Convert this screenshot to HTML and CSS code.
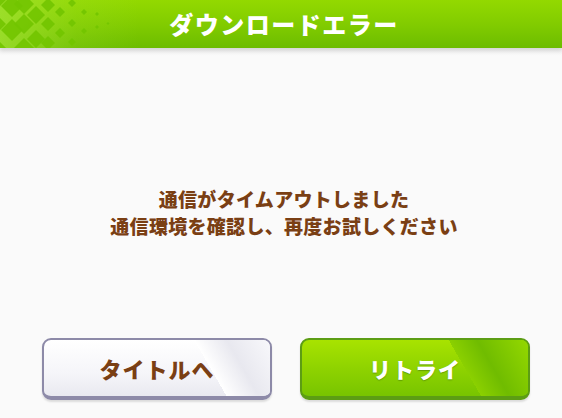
FILE: index.html
```html
<!DOCTYPE html>
<html lang="ja">
<head>
<meta charset="utf-8">
<link rel="stylesheet" href="styles.css">
</head>
<body>
<div class="dialog">
  <header class="header">
    <svg class="pattern" width="140" height="48" viewBox="0 0 140 48">
      <defs>
        <linearGradient id="fade" x1="0" x2="1" y1="0" y2="0">
          <stop offset="0" stop-color="#9fe030" stop-opacity="0.85"/>
          <stop offset="0.55" stop-color="#9fe030" stop-opacity="0.2"/>
          <stop offset="1" stop-color="#9fe030" stop-opacity="0"/>
        </linearGradient>
      </defs>
      <rect x="0" y="0" width="140" height="48" fill="url(#fade)"/>
      <g fill="#72c400" fill-opacity="0.9">
        <path d="M0 -6 l6 6 -6 6 -6 -6z"/>
        <path d="M0 18 l6 6 -6 6 -6 -6z"/>
        <path d="M0 42 l6 6 -6 6 -6 -6z"/>
        <path d="M12 -5 l11 11 -11 11 -11 -11z"/>
        <path d="M12 19 l11 11 -11 11 -11 -11z"/>
        <path d="M24 -6 l10 10 -10 10 -10 -10z"/>
        <path d="M24 14 l10 10 -10 10 -10 -10z"/>
        <path d="M24 38 l10 10 -10 10 -10 -10z"/>
        <path d="M36 6 l9 9 -9 9 -9 -9z"/>
        <path d="M36 30 l9 9 -9 9 -9 -9z"/>
        <path d="M48 -2 l7 7 -7 7 -7 -7z"/>
        <path d="M48 17 l7 7 -7 7 -7 -7z"/>
        <path d="M48 36 l7 7 -7 7 -7 -7z"/>
        <path d="M60 7 l5 5 -5 5 -5 -5z"/>
        <path d="M60 28 l5 5 -5 5 -5 -5z"/>
        <path d="M72 -1 l4 4 -4 4 -4 -4z"/>
        <path d="M72 19 l4 4 -4 4 -4 -4z"/>
        <path d="M72 38 l4 4 -4 4 -4 -4z"/>
        <path d="M84 9 l3 3 -3 3 -3 -3z"/>
        <path d="M84 28 l3 3 -3 3 -3 -3z"/>
        <path d="M97 12 l2 2 -2 2 -2 -2z"/>
        <path d="M97 25 l2 2 -2 2 -2 -2z"/>
        <path d="M108 22 l1.5 1.5 -1.5 1.5 -1.5 -1.5z"/>
      </g>
    </svg>
    <h1 class="title">ダウンロードエラー</h1>
  </header>
  <main class="body">
    <p class="message">通信がタイムアウトしました<br>通信環境を確認し、再度お試しください</p>
    <div class="buttons">
      <button class="btn btn-white"><span>タイトルへ</span></button>
      <button class="btn btn-green"><span>リトライ</span></button>
    </div>
  </main>
</div>
</body>
</html>
```

FILE: styles.css
```css
html, body {
  margin: 0;
  padding: 0;
}
body {
  width: 562px;
  height: 418px;
  overflow: hidden;
  background: #f8f8f8;
  font-family: "Noto Sans CJK JP", "Noto Sans", sans-serif;
}
.dialog {
  display: flex;
  flex-direction: column;
  height: 418px;
}
.header {
  position: relative;
  height: 48px;
  background: linear-gradient(#93d900, #82cc00 50%, #6cbc00);
  display: flex;
  align-items: center;
  justify-content: center;
  box-shadow: 0 3px 4px rgba(0,0,0,0.12);
  z-index: 1;
}
.pattern {
  position: absolute;
  left: 0;
  top: 0;
}
.title {
  position: relative;
  margin: 0;
  color: #fff;
  font-size: 24px;
  font-weight: 900;
  letter-spacing: 1.5px;
  line-height: 48px;
  padding-left: 6px;
}
.body {
  flex: 1;
  display: flex;
  flex-direction: column;
  background: linear-gradient(#f2f2f2, #fafafa 8px, #fafafa);
}
.message {
  margin: 137px 0 0;
  text-align: center;
  color: #7a3f14;
  font-size: 19px;
  font-weight: 900;
  line-height: 27px;
  letter-spacing: 0.3px;
  padding-left: 6px;
}
.buttons {
  display: flex;
  gap: 28px;
  padding-left: 42px;
  margin-top: 99px;
}
.btn {
  position: relative;
  width: 230px;
  height: 62px;
  border-radius: 9px;
  padding: 0;
  font-family: inherit;
  font-size: 22px;
  font-weight: 900;
  letter-spacing: 1px;
  overflow: hidden;
  display: flex;
  align-items: center;
  justify-content: center;
  box-shadow: 0 2px 2px rgba(0,0,0,0.12);
}
.btn span {
  position: relative;
}
.btn-white {
  color: #7a3f14;
  border: 2px solid #8d8aa8;
  border-bottom-width: 4px;
  background: linear-gradient(#ffffff, #f5f5f9 60%, #e9e9f0);
}
.btn-white::before {
  content: "";
  position: absolute;
  top: 0;
  bottom: 0;
  left: 150px;
  right: 0;
  background: linear-gradient(60deg, rgba(255,255,255,0) 0 30%, #ffffff 30%, #e8e8ef 60%, #f8f8fb 100%);
}
.btn-green {
  color: #fff;
  text-shadow: 0 1px 1px rgba(60,110,0,0.5);
  border: 2px solid #5c9d14;
  border-bottom-width: 4px;
  background: linear-gradient(#a8e300, #8fd300 50%, #78c400);
}
.btn-green::before {
  content: "";
  position: absolute;
  top: 0;
  bottom: 0;
  left: 145px;
  right: 0;
  background: linear-gradient(60deg, rgba(0,0,0,0) 0 30%, #8bd000 30%, #70bc00 55%, #94d800 100%);
}
```
